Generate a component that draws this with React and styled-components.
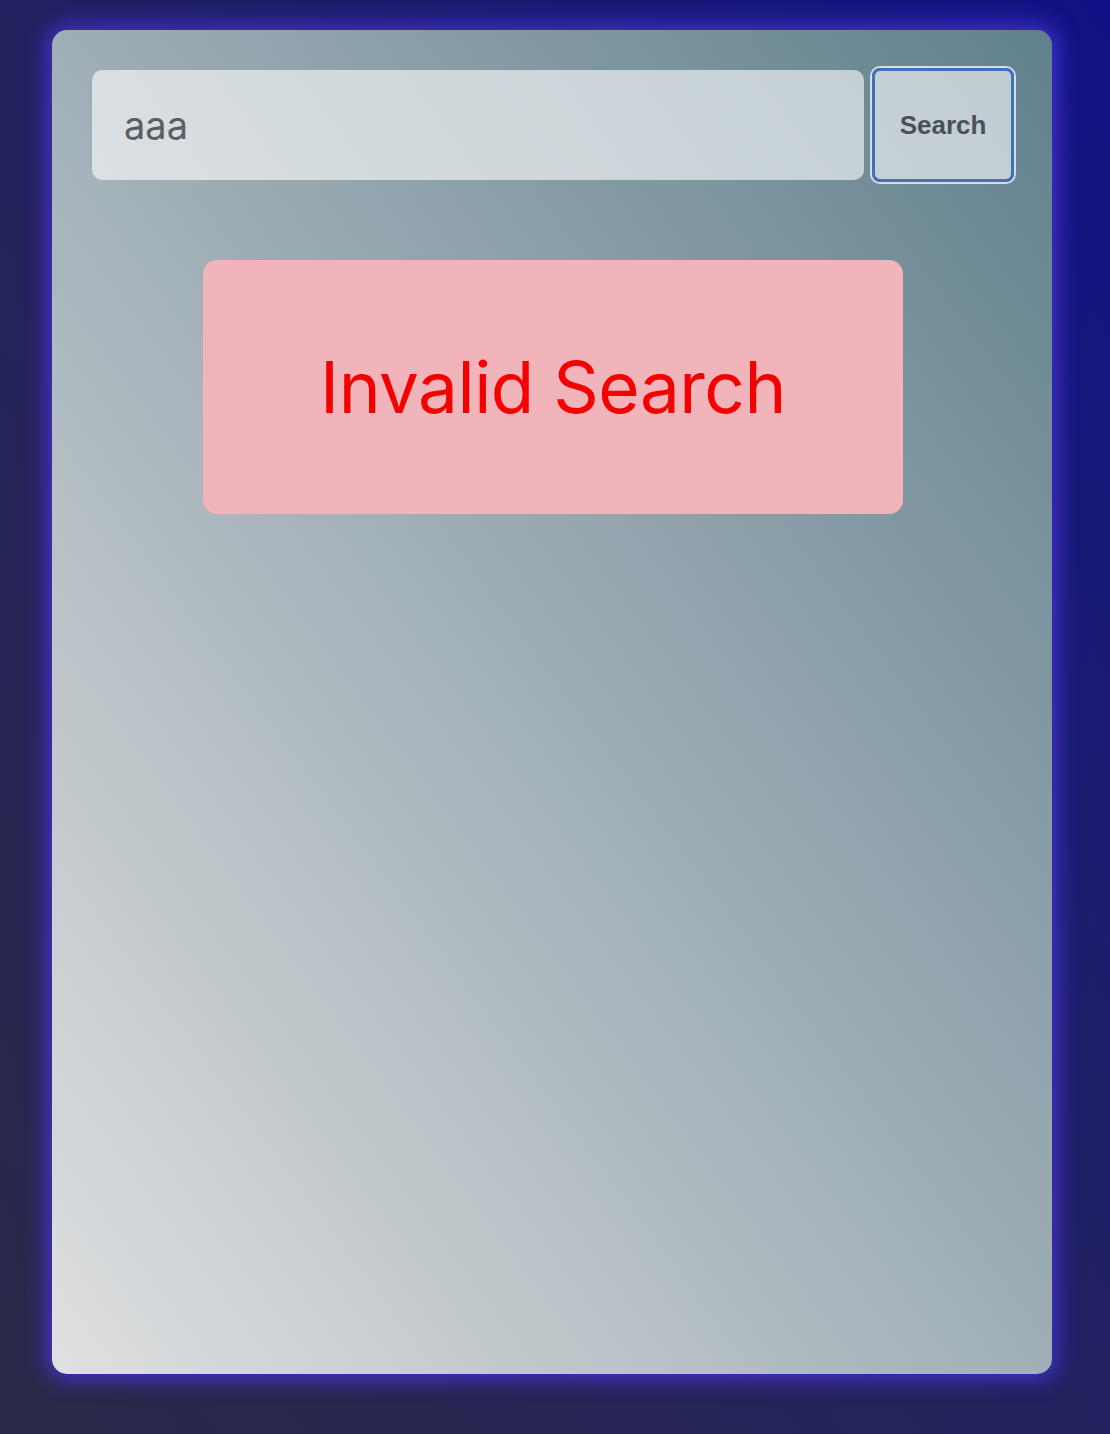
import React, { useState } from "react";
import styled, { createGlobalStyle } from "styled-components";

const GlobalStyle = createGlobalStyle`
  html, body {
    margin: 0;
    padding: 0;
  }
  body {
    min-height: 1434px;
    background: linear-gradient(to top right, #2b2a48 0%, #22215f 50%, #121287 100%);
    font-family: Inter, "Liberation Sans", sans-serif;
  }
`;

const Page = styled.div`
  padding: 30px 58px 60px 52px;
`;

const Card = styled.div`
  width: 1000px;
  height: 1344px;
  box-sizing: border-box;
  padding: 38px 38px 40px 40px;
  border-radius: 15px;
  background: linear-gradient(to top right, #dfe0e1 0%, #a6b3ba 45%, #60808d 100%);
  box-shadow: 0 0 20px 6px rgba(70, 50, 210, 0.9);
`;

const SearchRow = styled.form`
  display: flex;
  align-items: center;
  gap: 8px;
`;

const SearchInput = styled.input`
  flex: 1;
  height: 110px;
  box-sizing: border-box;
  border: none;
  border-radius: 10px;
  padding: 0 32px;
  background: rgba(255, 255, 255, 0.6);
  font-family: Inter, "Liberation Sans", sans-serif;
  font-size: 38px;
  color: #5b5f63;
  outline: none;
`;

const SearchButton = styled.button`
  width: 142px;
  height: 114px;
  box-sizing: border-box;
  border: 3px solid #3f72b8;
  border-radius: 8px;
  background: rgba(255, 255, 255, 0.6);
  box-shadow: 0 0 0 2px #d6dde3;
  font-family: "Liberation Sans", Arial, sans-serif;
  font-weight: bold;
  font-size: 26px;
  color: #4a5157;
  cursor: pointer;
`;

const ErrorBox = styled.div`
  width: 700px;
  height: 254px;
  margin: 78px auto 0;
  display: flex;
  align-items: center;
  justify-content: center;
  border-radius: 14px;
  background: #f1b4ba;
  color: #f50000;
  font-family: Inter, "Liberation Sans", sans-serif;
  font-size: 71px;
  letter-spacing: -0.5px;
`;

const App = () => {
  const [query, setQuery] = useState("aaa");

  const submit = (e) => {
    e.preventDefault();
  };

  return (
    <>
      <GlobalStyle />
      <Page>
        <Card>
          <SearchRow onSubmit={submit}>
            <SearchInput value={query} onChange={(e) => setQuery(e.target.value)} />
            <SearchButton type="submit">Search</SearchButton>
          </SearchRow>
          <ErrorBox>Invalid Search</ErrorBox>
        </Card>
      </Page>
    </>
  );
};

export default App;
